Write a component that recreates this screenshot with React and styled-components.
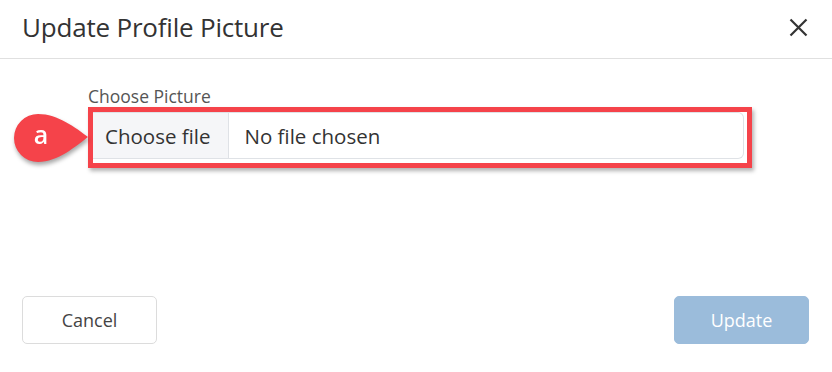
import React from 'react'
import styled, { createGlobalStyle } from 'styled-components'

const GlobalStyle = createGlobalStyle`
  html, body {
    margin: 0;
    padding: 0;
    background: #fff;
  }
  body {
    font-family: "Open Sans", "Noto Sans", sans-serif;
    color: #333;
  }
  * { box-sizing: border-box; }
`

const Modal = styled.div`
  width: 832px;
  height: 372px;
  display: flex;
  flex-direction: column;
  background: #fff;
`

const Header = styled.div`
  height: 59px;
  display: flex;
  align-items: center;
  justify-content: space-between;
  padding: 0 23px 4px 22px;
  border-bottom: 1px solid #e0e0e0;
`

const Title = styled.h2`
  margin: 0;
  font-size: 26px;
  font-weight: 400;
  color: #333;
  letter-spacing: -0.2px;
`

const CloseButton = styled.button`
  border: none;
  background: none;
  padding: 0;
  width: 22px;
  height: 22px;
  display: flex;
  align-items: center;
  justify-content: center;
  cursor: pointer;
`

const Body = styled.div`
  flex: 1;
  padding: 27px 0 0 88px;
`

const Label = styled.div`
  font-size: 17.5px;
  color: #555;
  line-height: 21px;
`

const FieldRow = styled.div`
  position: relative;
  width: 664px;
`

const Highlight = styled.div`
  border: 5px solid #f5434a;
  padding: 0 3px 4px 0;
  box-shadow: 2px 3px 4px rgba(0, 0, 0, 0.3);
`

const FileInput = styled.label`
  display: flex;
  height: 47px;
  border: 1px solid #dfe2e6;
  border-left: none;
  border-radius: 0 6px 6px 0;
  overflow: hidden;
  font-size: 20.5px;
  color: #333;
  cursor: pointer;
`

const FileButton = styled.span`
  display: flex;
  align-items: center;
  padding: 0 17px 0 12px;
  background: #f5f6f8;
  border-right: 1px solid #dfe2e6;
`

const FileName = styled.span`
  display: flex;
  align-items: center;
  padding-left: 16px;
`

const Badge = styled.div`
  position: absolute;
  left: -88px;
  top: -7px;
  width: 90px;
  height: 68px;
  filter: drop-shadow(1px 3px 2px rgba(0, 0, 0, 0.35));

  svg {
    display: block;
  }

  span {
    position: absolute;
    left: 17px;
    top: 12px;
    width: 48px;
    height: 48px;
    display: flex;
    align-items: center;
    justify-content: center;
    color: #fff;
    font-size: 25px;
    font-weight: 600;
    line-height: 1;
    padding-bottom: 4px;
  }
`

const Footer = styled.div`
  display: flex;
  justify-content: space-between;
  align-items: center;
  padding: 0 23px 28px 22px;
`

const Button = styled.button`
  width: 135px;
  height: 48px;
  border-radius: 5px;
  font-family: inherit;
  font-size: 18px;
  cursor: pointer;
  border: 1px solid ${p => (p.$primary ? '#9bbcdb' : '#dcdcdc')};
  background: ${p => (p.$primary ? '#9bbcdb' : '#fff')};
  color: ${p => (p.$primary ? '#fff' : '#444')};
`

const App = () => {
  return (
    <>
      <GlobalStyle />
      <Modal>
        <Header>
          <Title>Update Profile Picture</Title>
          <CloseButton aria-label="Close">
            <svg width="19" height="19" viewBox="0 0 19 19">
              <path d="M1.5 1.5L17.5 17.5M17.5 1.5L1.5 17.5" stroke="#333" strokeWidth="2.2" />
            </svg>
          </CloseButton>
        </Header>
        <Body>
          <Label>Choose Picture</Label>
          <FieldRow>
            <Badge>
              <svg width="90" height="68" viewBox="0 0 90 68">
                <path d="M88 37 C76 28 58 14 38 14 A24 24 0 0 0 38 62 C58 62 76 46 88 37 Z" fill="#f5434a" />
              </svg>
              <span>a</span>
            </Badge>
            <Highlight>
              <FileInput>
                <FileButton>Choose file</FileButton>
                <FileName>No file chosen</FileName>
              </FileInput>
            </Highlight>
          </FieldRow>
        </Body>
        <Footer>
          <Button>Cancel</Button>
          <Button $primary>Update</Button>
        </Footer>
      </Modal>
    </>
  )
}

export default App
